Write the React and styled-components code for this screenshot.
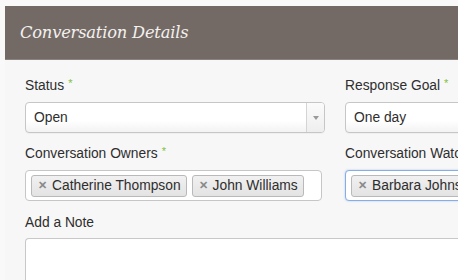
import React from "react";
import styled, { createGlobalStyle } from "styled-components";

const Global = createGlobalStyle`
  html, body { margin: 0; padding: 0; }
  body {
    background: #f9f9f9;
    width: 458px;
    height: 280px;
    overflow: hidden;
    font-family: "Liberation Sans", Arial, sans-serif;
  }
`;

const Page = styled.div`
  padding: 6px 0 0 5px;
  width: 900px;
`;

const Header = styled.div`
  height: 54px;
  background: #736a66;
  border-bottom: 1px solid #8a827e;
  display: flex;
  align-items: center;
  padding-left: 15px;
  box-sizing: border-box;
`;

const Title = styled.h1`
  margin: 0;
  font-family: "DejaVu Serif", Georgia, serif;
  font-style: italic;
  font-weight: normal;
  font-size: 16.3px;
  color: #f4f1ef;
  letter-spacing: -0.2px;
`;

const Body = styled.div`
  background: #f7f7f7;
  padding: 17px 0 0 20px;
  display: flex;
  flex-direction: column;
`;

const Row = styled.div`
  display: grid;
  grid-template-columns: 300px 300px;
  column-gap: 20px;
  margin-bottom: ${(p) => p.$mb || 12}px;
`;

const Field = styled.div`
  display: flex;
  flex-direction: column;
`;

const Label = styled.label`
  display: block;
  height: 18px;
  font-size: 13.8px;
  line-height: 18px;
  color: #2e2e2e;
  margin-bottom: ${(p) => p.$mb || 7}px;
`;

const Req = styled.span`
  color: #80c040;
  font-size: 11px;
  line-height: 0;
  margin-left: 4px;
  position: relative;
  top: -3px;
`;

const Select = styled.div`
  height: 31px;
  box-sizing: border-box;
  border: 1px solid #c6c6c6;
  border-radius: 4px;
  background: linear-gradient(#ffffff 60%, #f3f3f3);
  display: flex;
  align-items: stretch;
  box-shadow: 0 1px 0 rgba(0, 0, 0, 0.03);
`;

const SelectValue = styled.div`
  flex: 1;
  display: flex;
  align-items: center;
  padding-left: 8px;
  font-size: 13.8px;
  color: #2e2e2e;
`;

const Arrow = styled.div`
  width: 17px;
  border-left: 1px solid #d4d4d4;
  display: flex;
  align-items: center;
  justify-content: center;
  background: linear-gradient(#fbfbfb, #eeeeee);
  border-radius: 0 3px 3px 0;
  &::after {
    content: "";
    border-left: 3px solid transparent;
    border-right: 3px solid transparent;
    border-top: 4px solid #999;
    margin-top: 1px;
  }
`;

const TagBox = styled.div`
  height: 31px;
  width: ${(p) => p.$w || 300}px;
  box-sizing: border-box;
  border: 1px solid ${(p) => (p.$focus ? "#86aee6" : "#c6c6c6")};
  box-shadow: ${(p) => (p.$focus ? "0 0 2px rgba(100,150,230,0.5)" : "none")};
  border-radius: 4px;
  background: #fff;
  display: flex;
  align-items: center;
  gap: 5px;
  padding-left: 5px;
  white-space: nowrap;
  overflow: hidden;
`;

const Tag = styled.span`
  display: inline-flex;
  align-items: center;
  height: 22px;
  box-sizing: border-box;
  border: 1px solid #b9b9b9;
  border-radius: 3px;
  background: linear-gradient(#f1f1f1, #e3e3e3);
  padding: 0 5px 0 6px;
  font-size: 13.8px;
  color: #2e2e2e;
  flex-shrink: 0;
`;

const Remove = styled.span`
  font-size: 11px;
  font-weight: bold;
  color: #8a8a8a;
  margin-right: 5px;
  line-height: 1;
`;

const TextArea = styled.div`
  height: 80px;
  background: #fff;
  border: 1px solid #c8c8c8;
  border-radius: 4px 0 0 0;
  border-right: none;
`;

export default function App() {
  return (
    <>
      <Global />
      <Page>
        <Header>
          <Title>Conversation Details</Title>
        </Header>
        <Body>
          <Row $mb={12}>
            <Field>
              <Label>
                Status<Req>*</Req>
              </Label>
              <Select>
                <SelectValue>Open</SelectValue>
                <Arrow />
              </Select>
            </Field>
            <Field>
              <Label>
                Response Goal<Req>*</Req>
              </Label>
              <Select>
                <SelectValue>One day</SelectValue>
                <Arrow />
              </Select>
            </Field>
          </Row>
          <Row $mb={13}>
            <Field>
              <Label>
                Conversation Owners<Req>*</Req>
              </Label>
              <TagBox $w={297}>
                <Tag>
                  <Remove>✕</Remove>Catherine Thompson
                </Tag>
                <Tag>
                  <Remove>✕</Remove>John Williams
                </Tag>
              </TagBox>
            </Field>
            <Field>
              <Label>Conversation Watchers</Label>
              <TagBox $focus>
                <Tag>
                  <Remove>✕</Remove>Barbara Johnson
                </Tag>
              </TagBox>
            </Field>
          </Row>
          <Field>
            <Label $mb={6}>Add a Note</Label>
            <TextArea />
          </Field>
        </Body>
      </Page>
    </>
  );
}
